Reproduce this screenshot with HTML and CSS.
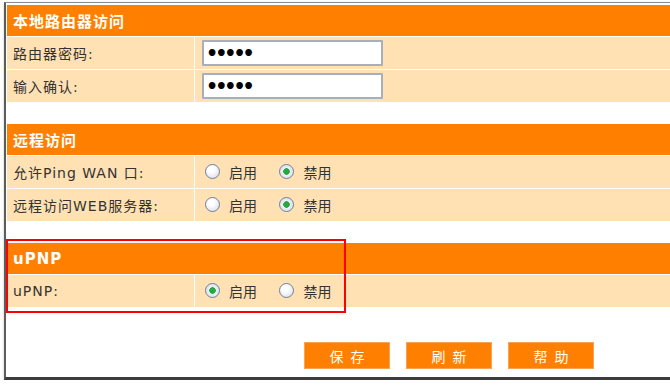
FILE: index.html
```html
<!DOCTYPE html>
<html lang="zh-CN">
<head>
    <meta charset="UTF-8">
    <title>远程管理</title>
    <link rel="stylesheet" href="styles.css">
</head>
<body>
<div class="window">
    <table class="panel">
        <tr><th colspan="2">本地路由器访问</th></tr>
        <tr>
            <td class="label">路由器密码:</td>
            <td class="value"><input class="pwd" type="password" value="12345"></td>
        </tr>
        <tr>
            <td class="label">输入确认:</td>
            <td class="value"><input class="pwd" type="password" value="12345"></td>
        </tr>
    </table>

    <table class="panel">
        <tr><th colspan="2">远程访问</th></tr>
        <tr>
            <td class="label">允许Ping WAN 口:</td>
            <td class="value">
                <label class="opt"><input type="radio" name="ping"> 启用</label>
                <label class="opt"><input type="radio" name="ping" checked> 禁用</label>
            </td>
        </tr>
        <tr>
            <td class="label">远程访问WEB服务器:</td>
            <td class="value">
                <label class="opt"><input type="radio" name="web"> 启用</label>
                <label class="opt"><input type="radio" name="web" checked> 禁用</label>
            </td>
        </tr>
    </table>

    <div class="marked">
        <table class="panel">
            <tr><th colspan="2">uPNP</th></tr>
            <tr>
                <td class="label">uPNP:</td>
                <td class="value">
                    <label class="opt"><input type="radio" name="upnp" checked> 启用</label>
                    <label class="opt"><input type="radio" name="upnp"> 禁用</label>
                </td>
            </tr>
        </table>
        <div class="highlight"></div>
    </div>

    <div class="actions">
        <button class="btn">保存</button>
        <button class="btn">刷新</button>
        <button class="btn">帮助</button>
    </div>
</div>
</body>
</html>
```

FILE: styles.css
```css
/* General Styles */
body {
    margin: 0;
    background-color: #fff;
    overflow: hidden;
    font-family: "DejaVu Sans", "Noto Sans CJK SC", sans-serif;
}

/* Window frame */
.window {
    box-sizing: border-box;
    width: 720px;
    height: 378px;
    margin: 2px 0 0 4px;
    padding-top: 1px;
    border-top: 1px solid #8c8c8c;
    border-left: 2px solid #5c5c5c;
    border-bottom: 3px solid #3c3c3c;
    box-shadow: 1px 2px 3px rgba(0, 0, 0, 0.45);
    background-color: #fff;
}

/* Setting tables */
.panel {
    width: 700px;
    border-collapse: separate;
    border-spacing: 1px;
    margin-bottom: 20px;
}

.panel th {
    height: 31px;
    padding: 0 0 0 6px;
    background-color: #ff8000;
    color: #fff;
    font-size: 15px;
    font-weight: bold;
    letter-spacing: 1px;
    text-align: left;
}

.panel td {
    height: 32px;
    padding: 0;
    background-color: #ffe1b4;
    color: #333;
    font-size: 14px;
}

.panel .label {
    width: 181px;
    padding-left: 6px;
    letter-spacing: 1px;
}

.panel .value {
    padding-left: 7px;
}

/* Password inputs */
.pwd {
    box-sizing: border-box;
    width: 181px;
    height: 26px;
    margin: 0;
    padding: 0 2px;
    border: 2px solid #a7afbd;
    border-radius: 1px;
    font-family: "DejaVu Sans", sans-serif;
    font-size: 19px;
    font-weight: bold;
    letter-spacing: -3px;
    color: #000;
}

/* Radio options */
.opt {
    display: inline-flex;
    align-items: center;
    margin-left: 3px;
    margin-right: 15px;
}

.opt input {
    appearance: none;
    box-sizing: border-box;
    width: 15px;
    height: 15px;
    margin: 0 9px 0 0;
    border: 1px solid #6f809a;
    border-radius: 50%;
    background: radial-gradient(circle at 40% 35%, #fff 25%, #d3d9e2);
}

.opt input:checked {
    background: radial-gradient(circle, #27a843 0 3px, #eef1f4 3.5px, #d3d9e2);
}

/* uPNP block with annotation box */
.marked {
    position: relative;
}

.marked .panel {
    margin-bottom: 34px;
}

.highlight {
    position: absolute;
    left: 0;
    top: -3px;
    box-sizing: border-box;
    width: 340px;
    height: 74px;
    border: 2px solid #f00;
}

/* Buttons */
.actions {
    display: flex;
    gap: 16px;
    padding-left: 298px;
}

.btn {
    width: 86px;
    height: 27px;
    padding: 0;
    border: 1px solid #f7a455;
    background-color: #ff8000;
    color: #fff;
    font-family: "Noto Sans CJK SC", sans-serif;
    font-size: 14px;
    letter-spacing: 7px;
    text-indent: 7px;
}
```
